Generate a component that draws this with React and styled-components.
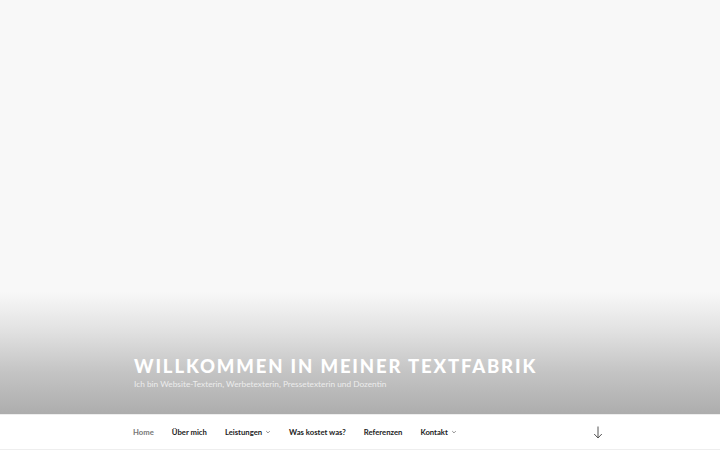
import styled, { createGlobalStyle } from "styled-components";

const Global = createGlobalStyle`
  html, body {
    margin: 0;
    padding: 0;
    background: #fff;
    font-family: Lato, "Liberation Sans", sans-serif;
  }
`;

const Page = styled.div`
  width: 720px;
  height: 450px;
  display: flex;
  flex-direction: column;
  overflow: hidden;
`;

const Header = styled.header`
  height: 414px;
  display: flex;
  flex-direction: column;
  justify-content: flex-end;
  padding: 0 0 25px 134px;
  box-sizing: border-box;
  background: linear-gradient(
    to bottom,
    #f8f8f8 0,
    #f8f8f8 292px,
    #e2e2e2 330px,
    #c4c4c4 372px,
    #adadad 414px
  );
`;

const Title = styled.h1`
  margin: 0;
  font-family: Lato, "Liberation Sans", sans-serif;
  font-weight: 900;
  font-size: 18.5px;
  line-height: 1.1;
  letter-spacing: 0.1em;
  text-transform: uppercase;
  color: #fff;
`;

const Tagline = styled.p`
  margin: 3px 0 0;
  font-size: 8.3px;
  font-weight: 400;
  color: #ececec;
`;

const Nav = styled.nav`
  height: 36px;
  box-sizing: border-box;
  border-top: 1px solid #eee;
  border-bottom: 1px solid #eee;
  background: #fff;
  display: flex;
  align-items: center;
  padding: 0 0 0 133px;
`;

const Menu = styled.ul`
  list-style: none;
  margin: 0;
  padding: 0;
  display: flex;
  align-items: center;
  gap: 18px;
  flex: 1;
`;

const Item = styled.li`
  display: flex;
  align-items: center;
  gap: 3px;
  font-size: 7.7px;
  font-weight: 700;
  color: ${(p) => (p.$current ? "#777" : "#222")};
`;

const ScrollDown = styled.div`
  width: 12px;
  height: 14px;
  margin-right: 116px;
  display: flex;
  align-items: center;
  justify-content: center;
  color: #555;
`;

const Chevron = () => (
  <svg width="6" height="6" viewBox="0 0 10 10" fill="none" stroke="#666" strokeWidth="1.2">
    <path d="M2 3.5 L5 6.5 L8 3.5" />
  </svg>
);

const items = [
  { label: "Home", current: true },
  { label: "Über mich" },
  { label: "Leistungen", sub: true },
  { label: "Was kostet was?" },
  { label: "Referenzen" },
  { label: "Kontakt", sub: true },
];

export default function App() {
  return (
    <Page>
      <Global />
      <Header>
        <Title>Willkommen in meiner Textfabrik</Title>
        <Tagline>Ich bin Website-Texterin, Werbetexterin, Pressetexterin und Dozentin</Tagline>
      </Header>
      <Nav>
        <Menu>
          {items.map((it) => (
            <Item key={it.label} $current={it.current}>
              {it.label}
              {it.sub && <Chevron />}
            </Item>
          ))}
        </Menu>
        <ScrollDown>
          <svg width="10" height="13" viewBox="0 0 10 13" fill="none" stroke="currentColor" strokeWidth="1">
            <path d="M5 0.5 V12 M1.2 8 L5 12 L8.8 8" />
          </svg>
        </ScrollDown>
      </Nav>
    </Page>
  );
}
